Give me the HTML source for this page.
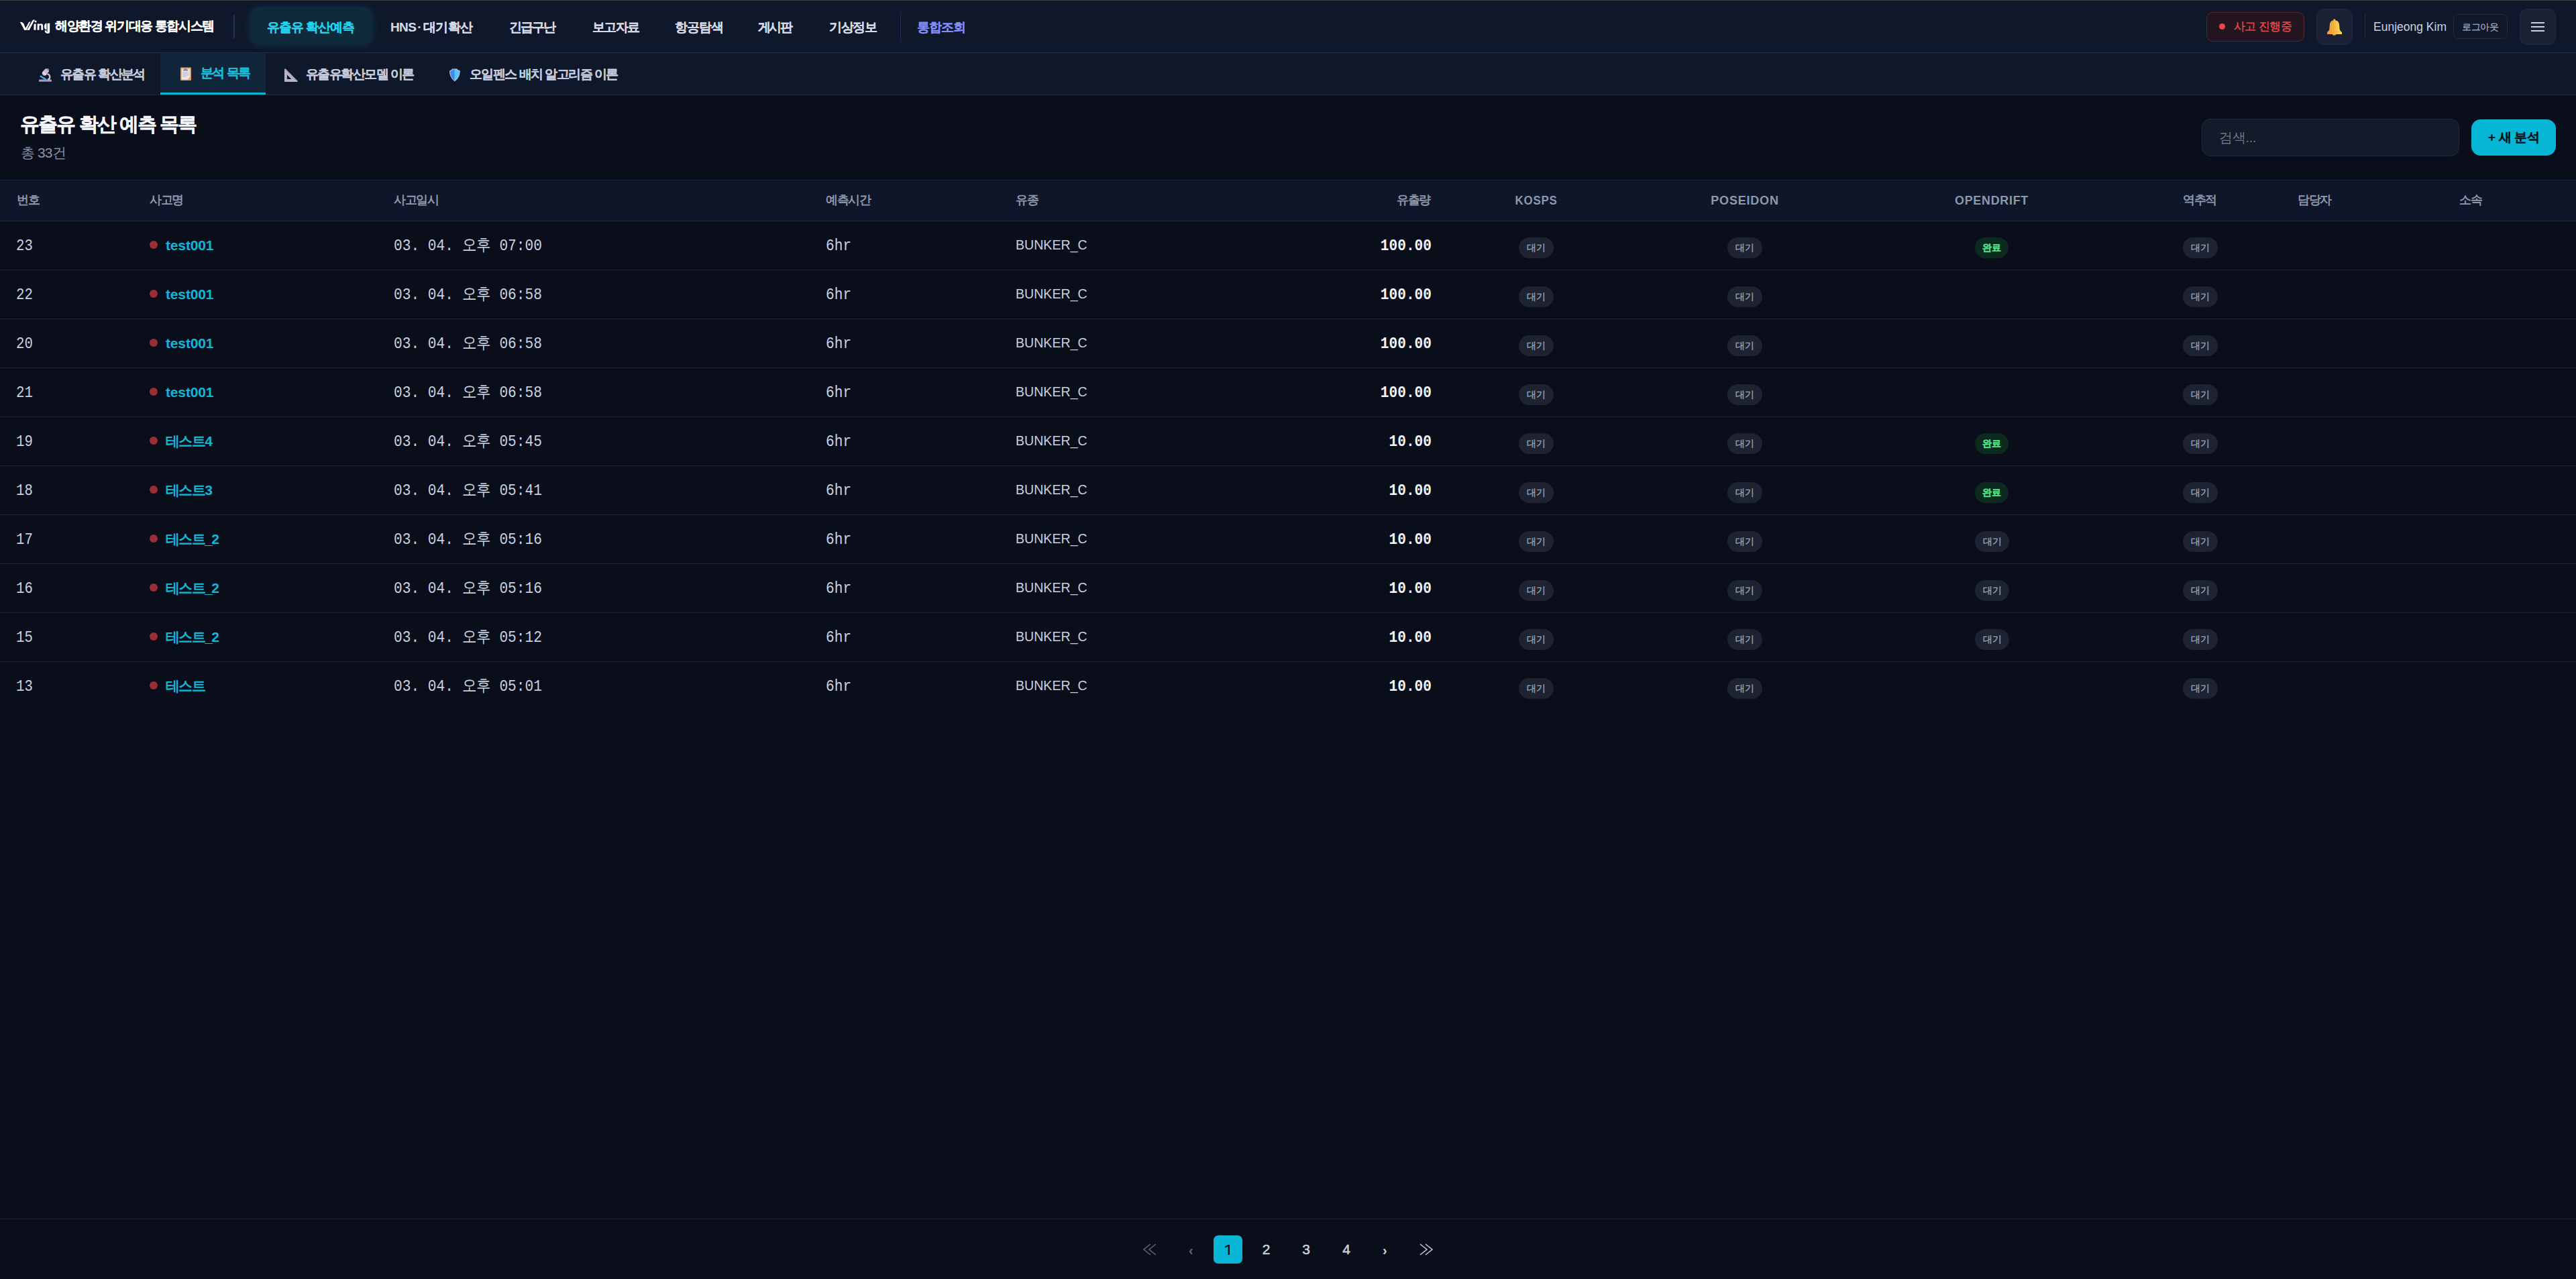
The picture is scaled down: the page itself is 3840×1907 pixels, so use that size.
<!DOCTYPE html><html lang="ko"><head><meta charset="utf-8"><title>유출유 확산 예측 목록</title><style>
*{box-sizing:border-box;margin:0;padding:0}
html,body{width:3840px;height:1907px;overflow:hidden}
body{position:relative;background:#0a0e1a;font-family:"Liberation Sans",sans-serif;color:#c9d1e0}
.a{position:absolute;white-space:nowrap}
.ko{-webkit-text-stroke:0.35px currentColor}
.ni{position:absolute;white-space:nowrap;top:25px;font-size:19px;letter-spacing:-1px;font-weight:700;line-height:32px;color:#d3dae6;-webkit-text-stroke:0.12px currentColor}
.tab{position:absolute;white-space:nowrap;top:95px;font-size:19px;letter-spacing:-1.55px;font-weight:700;line-height:32px;color:#c3cadb;-webkit-text-stroke:0.12px currentColor}
.th{position:absolute;white-space:nowrap;top:284px;font-size:17.5px;letter-spacing:-1.3px;font-weight:700;line-height:28px;color:#8e98ab;-webkit-text-stroke:0px currentColor}
.thl{position:absolute;white-space:nowrap;top:285px;font-size:19px;letter-spacing:0.8px;transform:scaleX(0.875);font-weight:700;line-height:28px;color:#8e98ab}
.rb{position:absolute;left:0;width:3840px;height:1px;background:#1a2338}
.num{position:absolute;white-space:nowrap;font-family:'Liberation Mono',monospace;font-size:23.5px;line-height:30px;color:#c9d1e0;transform:scaleX(0.88);transform-origin:0 0}
.name{position:absolute;white-space:nowrap;font-size:21px;font-weight:700;line-height:30px;color:#0eb8d6;letter-spacing:-0.15px}
.dot{position:absolute;width:12px;height:12px;border-radius:50%;background:#9a2d35}
.date{position:absolute;white-space:nowrap;font-family:'Liberation Mono',monospace;font-size:23.5px;line-height:30px;color:#c9d1e0;transform:scaleX(0.9);transform-origin:0 0}
.hr{position:absolute;white-space:nowrap;font-family:'Liberation Mono',monospace;font-size:23.5px;line-height:30px;color:#c9d1e0;transform:scaleX(0.9);transform-origin:0 0}
.oil{position:absolute;white-space:nowrap;font-size:19.6px;line-height:30px;color:#c9d1e0}
.amt{position:absolute;white-space:nowrap;font-family:'Liberation Mono',monospace;font-size:23.5px;font-weight:700;line-height:30px;color:#f1f5fa;text-align:right;transform:scaleX(0.9);transform-origin:100% 0}
.bdg{position:absolute;height:31px;width:52px;border-radius:16px;background:#1d2331;color:#9aa3b4;font-size:14px;line-height:31px;text-align:center;-webkit-text-stroke:0.35px currentColor}
.bdg.ok{background:#0d2a1f;color:#4ade80;width:50px;font-weight:700}
.pg{position:absolute;top:1841px;height:43px;width:43px;text-align:center;line-height:43px;font-size:21px;font-weight:700;color:#c8cfdd}
</style></head><body>
<div class="a" style="left:0;top:0;width:3840px;height:1px;background:#3a3b3e"></div>
<div class="a" style="left:0;top:1px;width:3840px;height:77px;background:#0f172a"></div>
<div class="a" style="left:0;top:78px;width:3840px;height:1px;background:#1e2a45"></div>
<svg class="a" style="left:26px;top:24px" width="54" height="30" viewBox="0 0 54 30"><g fill="#fff"><path d="M3.8 8.8 Q7.5 8.6 9.2 11 L13.4 20.9 L10.4 21 Z"/><path d="M10.4 21 L13.4 20.9 L19.6 8.2 Q18 8.3 16.8 9.4 Z"/><path d="M14 21.1 L17.6 21 L24.6 7.5 Q25.6 5.6 26.2 5.2 Q23.8 5.1 22.4 6.6 Z"/><circle cx="27" cy="8" r="1.6"/><path d="M24.6 12 L27.6 11.2 L27.4 20.8 L24.4 20.8 Z"/><path d="M29.6 20.8 L29.8 11.6 L32.4 11.2 L32.5 12.6 Q34 11.1 36.4 11.4 Q38.2 12 38.2 14.5 L38.2 20.8 L35.3 20.8 L35.3 14.8 Q35 13.2 33.8 13.4 Q32.6 13.8 32.5 15 L32.5 20.8 Z"/><path d="M44.6 10.9 L48.2 10.5 L48.2 24.2 Q48 26 45.2 26 Q41.6 26 40.4 21.4 L43.2 21.2 Q43.9 24.2 44.6 24.1 Z"/><path d="M43.5 10.6 Q40 10.9 40 15.6 Q40 20.3 43.5 20.6 Z"/></g></svg>
<div class="a ko" style="left:82px;top:23px;font-size:18.5px;letter-spacing:-1.35px;font-weight:700;line-height:32px;color:#fff;-webkit-text-stroke:0.15px #fff">해양환경 위기대응 통합시스템</div>
<div class="a" style="left:348px;top:22px;width:2px;height:35px;background:#27324d"></div>
<div class="a" style="left:373px;top:11px;width:182px;height:56px;border-radius:16px;background:#0e2a3b;box-shadow:0 0 10px 2px rgba(6,182,212,0.14)"></div>
<div class="ni" style="left:398px;letter-spacing:-1px;color:#22d3ee;">유출유 확산예측</div>
<div class="ni" style="left:582px;letter-spacing:-0.6px;">HNS<span style="margin:0 3px 0 2px">·</span>대기확산</div>
<div class="ni" style="left:759px;letter-spacing:-2.1px;">긴급구난</div>
<div class="ni" style="left:883px;letter-spacing:-1.6px;">보고자료</div>
<div class="ni" style="left:1006px;letter-spacing:-0.9px;">항공탐색</div>
<div class="ni" style="left:1130px;letter-spacing:-2.6px;">게시판</div>
<div class="ni" style="left:1236px;letter-spacing:-1.5px;">기상정보</div>
<div class="a" style="left:1342px;top:13px;width:110px;height:53px;border-left:1px solid #262c52;border-radius:7px 0 0 7px"></div>
<div class="ni" style="left:1367px;color:#818cf8">통합조회</div>
<div class="a" style="left:3289px;top:18px;width:146px;height:44px;border-radius:9px;background:#241621;border:1.5px solid #5c2229"></div>
<div class="a" style="left:3308px;top:35px;width:9px;height:9px;border-radius:50%;background:#ef4444"></div>
<div class="a" style="left:3330px;top:25px;font-size:17px;letter-spacing:-0.6px;line-height:30px;color:#ef4b4b;-webkit-text-stroke:0.3px #ef4b4b">사고 진행중</div>
<div class="a" style="left:3453px;top:13px;width:54px;height:54px;border-radius:11px;background:#1a2135;border:1px solid #1f2a45"></div>
<svg class="a" style="left:3466px;top:27px" width="28" height="28" viewBox="0 0 28 28"><defs><linearGradient id="bg1" x1="0" x2="1"><stop offset="0" stop-color="#ea9548"/><stop offset="0.45" stop-color="#f2b23e"/><stop offset="1" stop-color="#ffe75c"/></linearGradient></defs><ellipse cx="13.6" cy="24.3" rx="2.7" ry="1.5" fill="#ef9a5a"/><path d="M12 3.6 Q12.3 1.2 13.8 1.2 Q15.3 1.2 15.6 3.6 Q20 4 20.9 9 L21.7 17 Q22.5 19.3 25 21.2 L25 24 L3 24 L3 21.2 Q5.5 19.3 6.3 17 L7 9 Q7.8 4 12 3.6 Z" fill="url(#bg1)"/><path d="M4.8 19.6 L22.6 19.6 L24 20.8 L3.6 20.8 Z" fill="#f0a83c" opacity="0.6"/></svg>
<div class="a" style="left:3525px;top:21px;width:1px;height:36px;background:#243049"></div>
<div class="a" style="left:3538px;top:25px;font-size:17.5px;line-height:30px;color:#c9d3e4">Eunjeong Kim</div>
<div class="a" style="left:3657px;top:21px;width:81px;height:37px;border-radius:7px;border:1px solid #1f2a44"></div>
<div class="a" style="left:3670px;top:25px;font-size:14px;letter-spacing:-0.3px;line-height:30px;color:#a9b3c5;-webkit-text-stroke:0.2px #a9b3c5">로그아웃</div>
<div class="a" style="left:3756px;top:13px;width:54px;height:54px;border-radius:11px;background:#1a2135;border:1px solid #1f2a45"></div>
<div class="a" style="left:3773px;top:33px;width:20px;height:2px;background:#c9d1e0"></div>
<div class="a" style="left:3773px;top:39px;width:20px;height:2px;background:#c9d1e0"></div>
<div class="a" style="left:3773px;top:45px;width:20px;height:2px;background:#c9d1e0"></div>
<div class="a" style="left:0;top:79px;width:3840px;height:62px;background:#0f172a"></div>
<div class="a" style="left:0;top:141px;width:3840px;height:1px;background:#1e2a45"></div>
<div class="a" style="left:239px;top:79px;width:157px;height:62px;background:#10243a"></div>
<div class="a" style="left:239px;top:138px;width:157px;height:3px;background:#06b6d4"></div>
<svg class="a" style="left:57px;top:102px" width="21" height="21" viewBox="0 0 21 21"><rect x="1" y="16.6" width="19" height="3.4" rx="1" fill="#a999b8"/><rect x="1" y="19.1" width="19" height="0.9" fill="#8e62b4"/><path d="M13.4 8.3 A4.4 4.4 0 0 1 14.4 16.8" stroke="#cbc5d5" stroke-width="2.3" fill="none"/><g transform="rotate(40 10.8 5.6)"><rect x="7.3" y="-0.2" width="7" height="11.6" rx="3.5" fill="#c6c0cf"/><rect x="7.3" y="7.2" width="7" height="1.7" fill="#e9dbf7"/><rect x="9" y="-1" width="3.6" height="2.2" rx="1" fill="#8d8595"/></g><line x1="3.6" y1="11.8" x2="11.4" y2="16.4" stroke="#45abf3" stroke-width="2.3" stroke-linecap="round"/></svg>
<div class="tab" style="left:90px">유출유 확산분석</div>
<svg class="a" style="left:268px;top:99px" width="18" height="22" viewBox="0 0 18 22"><rect x="1" y="1.6" width="16" height="19.3" rx="1.2" fill="#e6a05a"/><path d="M2.8 3.4 L15 3.4 L15 16.4 L12 19.4 L2.8 19.4 Z" fill="#ece6f4"/><path d="M15 16.4 L12 19.4 L12 16.4 Z" fill="#d8d2e4"/><path d="M5 6.8 Q5.2 3.8 7.6 3.6 L8.6 1.2 L9.6 3.6 Q12 3.8 12.2 6.8 Z" fill="#948b9c"/><g fill="#c4bfcd"><rect x="3.9" y="8.6" width="9.6" height="1.2"/><rect x="3.9" y="10.6" width="9.6" height="1.2"/><rect x="3.9" y="12.6" width="9.6" height="1.2"/><rect x="3.9" y="14.6" width="5.6" height="1.2"/></g></svg>
<div class="tab" style="left:299px;top:93px;color:#16bedc">분석 목록</div>
<svg class="a" style="left:423px;top:101px" width="22" height="22" viewBox="0 0 22 22"><path d="M1 2.6 Q1 0.9 2.6 1.6 L21 20 Q21 21 20 21 L1.8 21 Q1 21 1 20 Z" fill="#b9b6c2"/><path d="M4.9 10.6 L11.4 17 L4.9 17 Z" fill="#0f1526"/><g fill="#a579f0"><circle cx="2.8" cy="3.6" r="0.7"/><circle cx="4.8" cy="5.5" r="0.7"/><circle cx="6.7" cy="7.4" r="0.7"/><circle cx="8.6" cy="9.2" r="0.7"/><circle cx="10.5" cy="11.1" r="0.7"/><circle cx="12.4" cy="13" r="0.7"/><circle cx="14.3" cy="14.8" r="0.7"/><circle cx="16.2" cy="16.6" r="0.7"/><circle cx="18.2" cy="18.5" r="0.7"/></g></svg>
<div class="tab" style="left:456px">유출유확산모델 이론</div>
<svg class="a" style="left:669px;top:101px" width="18" height="22" viewBox="0 0 18 22"><path d="M5 1.4 L12.3 1.4 L13.2 3 L16.8 4.5 Q17.2 14 8.8 20.6 Q0.6 14 1.1 4.5 L4.3 3 Z" fill="#c3c6d6"/><path d="M5.6 2.5 L8.8 2.5 L8.8 19.4 Q1.8 13.5 2.2 5.3 L5 4 Z" fill="#3d88ec"/><path d="M8.8 2.5 L11.8 2.5 L12.6 4 L15.7 5.3 Q16 13.5 8.8 19.4 Z" fill="#55c7fc"/></svg>
<div class="tab" style="left:700px">오일펜스 배치 알고리즘 이론</div>
<div class="a" style="left:30px;top:165px;font-size:28.5px;letter-spacing:-1.85px;font-weight:700;line-height:40px;color:#f4f6fb;-webkit-text-stroke:0.35px #f4f6fb">유출유 확산 예측 목록</div>
<div class="a" style="left:31px;top:213px;font-size:21px;letter-spacing:-0.9px;line-height:30px;color:#8a94a7">총 33건</div>
<div class="a" style="left:3282px;top:177px;width:384px;height:56px;border-radius:13px;background:#131a2a;border:1px solid #1e2840"></div>
<div class="a" style="left:3308px;top:190px;font-size:20px;letter-spacing:-0.3px;line-height:30px;color:#6d7689">검색...</div>
<div class="a" style="left:3684px;top:178px;width:126px;height:54px;border-radius:14px;background:#06b6d4"></div>
<div class="a" style="left:3709px;top:190px;font-size:19px;letter-spacing:-0.4px;font-weight:700;line-height:30px;color:#07111c;-webkit-text-stroke:0.15px #07111c">+ 새 분석</div>
<div class="a" style="left:0;top:268px;width:3840px;height:1px;background:#1c2640"></div>
<div class="a" style="left:0;top:269px;width:3840px;height:60px;background:#0f1629"></div>
<div class="a" style="left:0;top:329px;width:3840px;height:1px;background:#1e2a45"></div>
<div class="th" style="left:25px">번호</div>
<div class="th" style="left:223px">사고명</div>
<div class="th" style="left:587px">사고일시</div>
<div class="th" style="left:1231px">예측시간</div>
<div class="th" style="left:1514px">유종</div>
<div class="th" style="left:1980px;width:152px;text-align:right">유출량</div>
<div class="thl" style="left:2139.5px;width:300px;text-align:center;transform:scaleX(0.89)">KOSPS</div>
<div class="thl" style="left:2451px;width:300px;text-align:center;transform:scaleX(0.95)">POSEIDON</div>
<div class="thl" style="left:2819px;width:300px;text-align:center;transform:scaleX(0.94)">OPENDRIFT</div>
<div class="th" style="left:3129px;width:300px;text-align:center">역추적</div>
<div class="th" style="left:3425px">담당자</div>
<div class="th" style="left:3666px">소속</div>
<div class="num" style="left:24px;top:352px">23</div>
<div class="dot" style="left:223px;top:359px"></div>
<div class="name" style="left:247px;top:351px;">test001</div>
<div class="date" style="left:587px;top:352px">03. 04. 오후 07:00</div>
<div class="hr" style="left:1231px;top:352px">6hr</div>
<div class="oil" style="left:1514px;top:350px">BUNKER_C</div>
<div class="amt" style="left:1934px;width:200px;top:352px">100.00</div>
<div class="bdg" style="left:2264px;top:354px">대기</div>
<div class="bdg" style="left:2575px;top:354px">대기</div>
<div class="bdg ok" style="left:2944px;top:354px">완료</div>
<div class="bdg" style="left:3254px;top:354px">대기</div>
<div class="rb" style="top:402px"></div>
<div class="num" style="left:24px;top:425px">22</div>
<div class="dot" style="left:223px;top:432px"></div>
<div class="name" style="left:247px;top:424px;">test001</div>
<div class="date" style="left:587px;top:425px">03. 04. 오후 06:58</div>
<div class="hr" style="left:1231px;top:425px">6hr</div>
<div class="oil" style="left:1514px;top:423px">BUNKER_C</div>
<div class="amt" style="left:1934px;width:200px;top:425px">100.00</div>
<div class="bdg" style="left:2264px;top:427px">대기</div>
<div class="bdg" style="left:2575px;top:427px">대기</div>
<div class="bdg" style="left:3254px;top:427px">대기</div>
<div class="rb" style="top:475px"></div>
<div class="num" style="left:24px;top:498px">20</div>
<div class="dot" style="left:223px;top:505px"></div>
<div class="name" style="left:247px;top:497px;">test001</div>
<div class="date" style="left:587px;top:498px">03. 04. 오후 06:58</div>
<div class="hr" style="left:1231px;top:498px">6hr</div>
<div class="oil" style="left:1514px;top:496px">BUNKER_C</div>
<div class="amt" style="left:1934px;width:200px;top:498px">100.00</div>
<div class="bdg" style="left:2264px;top:500px">대기</div>
<div class="bdg" style="left:2575px;top:500px">대기</div>
<div class="bdg" style="left:3254px;top:500px">대기</div>
<div class="rb" style="top:548px"></div>
<div class="num" style="left:24px;top:571px">21</div>
<div class="dot" style="left:223px;top:578px"></div>
<div class="name" style="left:247px;top:570px;">test001</div>
<div class="date" style="left:587px;top:571px">03. 04. 오후 06:58</div>
<div class="hr" style="left:1231px;top:571px">6hr</div>
<div class="oil" style="left:1514px;top:569px">BUNKER_C</div>
<div class="amt" style="left:1934px;width:200px;top:571px">100.00</div>
<div class="bdg" style="left:2264px;top:573px">대기</div>
<div class="bdg" style="left:2575px;top:573px">대기</div>
<div class="bdg" style="left:3254px;top:573px">대기</div>
<div class="rb" style="top:621px"></div>
<div class="num" style="left:24px;top:644px">19</div>
<div class="dot" style="left:223px;top:651px"></div>
<div class="name" style="left:247px;top:643px;letter-spacing:-1.6px;">테스트4</div>
<div class="date" style="left:587px;top:644px">03. 04. 오후 05:45</div>
<div class="hr" style="left:1231px;top:644px">6hr</div>
<div class="oil" style="left:1514px;top:642px">BUNKER_C</div>
<div class="amt" style="left:1934px;width:200px;top:644px">10.00</div>
<div class="bdg" style="left:2264px;top:646px">대기</div>
<div class="bdg" style="left:2575px;top:646px">대기</div>
<div class="bdg ok" style="left:2944px;top:646px">완료</div>
<div class="bdg" style="left:3254px;top:646px">대기</div>
<div class="rb" style="top:694px"></div>
<div class="num" style="left:24px;top:717px">18</div>
<div class="dot" style="left:223px;top:724px"></div>
<div class="name" style="left:247px;top:716px;letter-spacing:-1.6px;">테스트3</div>
<div class="date" style="left:587px;top:717px">03. 04. 오후 05:41</div>
<div class="hr" style="left:1231px;top:717px">6hr</div>
<div class="oil" style="left:1514px;top:715px">BUNKER_C</div>
<div class="amt" style="left:1934px;width:200px;top:717px">10.00</div>
<div class="bdg" style="left:2264px;top:719px">대기</div>
<div class="bdg" style="left:2575px;top:719px">대기</div>
<div class="bdg ok" style="left:2944px;top:719px">완료</div>
<div class="bdg" style="left:3254px;top:719px">대기</div>
<div class="rb" style="top:767px"></div>
<div class="num" style="left:24px;top:790px">17</div>
<div class="dot" style="left:223px;top:797px"></div>
<div class="name" style="left:247px;top:789px;letter-spacing:-1.6px;">테스트_2</div>
<div class="date" style="left:587px;top:790px">03. 04. 오후 05:16</div>
<div class="hr" style="left:1231px;top:790px">6hr</div>
<div class="oil" style="left:1514px;top:788px">BUNKER_C</div>
<div class="amt" style="left:1934px;width:200px;top:790px">10.00</div>
<div class="bdg" style="left:2264px;top:792px">대기</div>
<div class="bdg" style="left:2575px;top:792px">대기</div>
<div class="bdg" style="left:2944px;width:51px;top:792px">대기</div>
<div class="bdg" style="left:3254px;top:792px">대기</div>
<div class="rb" style="top:840px"></div>
<div class="num" style="left:24px;top:863px">16</div>
<div class="dot" style="left:223px;top:870px"></div>
<div class="name" style="left:247px;top:862px;letter-spacing:-1.6px;">테스트_2</div>
<div class="date" style="left:587px;top:863px">03. 04. 오후 05:16</div>
<div class="hr" style="left:1231px;top:863px">6hr</div>
<div class="oil" style="left:1514px;top:861px">BUNKER_C</div>
<div class="amt" style="left:1934px;width:200px;top:863px">10.00</div>
<div class="bdg" style="left:2264px;top:865px">대기</div>
<div class="bdg" style="left:2575px;top:865px">대기</div>
<div class="bdg" style="left:2944px;width:51px;top:865px">대기</div>
<div class="bdg" style="left:3254px;top:865px">대기</div>
<div class="rb" style="top:913px"></div>
<div class="num" style="left:24px;top:936px">15</div>
<div class="dot" style="left:223px;top:943px"></div>
<div class="name" style="left:247px;top:935px;letter-spacing:-1.6px;">테스트_2</div>
<div class="date" style="left:587px;top:936px">03. 04. 오후 05:12</div>
<div class="hr" style="left:1231px;top:936px">6hr</div>
<div class="oil" style="left:1514px;top:934px">BUNKER_C</div>
<div class="amt" style="left:1934px;width:200px;top:936px">10.00</div>
<div class="bdg" style="left:2264px;top:938px">대기</div>
<div class="bdg" style="left:2575px;top:938px">대기</div>
<div class="bdg" style="left:2944px;width:51px;top:938px">대기</div>
<div class="bdg" style="left:3254px;top:938px">대기</div>
<div class="rb" style="top:986px"></div>
<div class="num" style="left:24px;top:1009px">13</div>
<div class="dot" style="left:223px;top:1016px"></div>
<div class="name" style="left:247px;top:1008px;letter-spacing:-1.6px;">테스트</div>
<div class="date" style="left:587px;top:1009px">03. 04. 오후 05:01</div>
<div class="hr" style="left:1231px;top:1009px">6hr</div>
<div class="oil" style="left:1514px;top:1007px">BUNKER_C</div>
<div class="amt" style="left:1934px;width:200px;top:1009px">10.00</div>
<div class="bdg" style="left:2264px;top:1011px">대기</div>
<div class="bdg" style="left:2575px;top:1011px">대기</div>
<div class="bdg" style="left:3254px;top:1011px">대기</div>
<div class="a" style="left:0;top:1817px;width:3840px;height:1px;background:#1c2640"></div>
<svg class="a" style="left:1703px;top:1854px" width="22" height="18" viewBox="0 0 22 18"><path d="M12 1 L2 9 L12 17 M20 1 L10 9 L20 17" stroke="#5f6577" stroke-width="1.6" fill="none"/></svg>
<div class="a" style="left:1772px;top:1852px;font-size:20px;line-height:24px;color:#5f6577;font-weight:700">&lsaquo;</div>
<div class="a" style="left:1809px;top:1842px;width:43px;height:42px;border-radius:7px;background:#06b6d4"></div>
<svg class="a" style="left:1822px;top:1852px" width="16" height="24" viewBox="0 0 16 24"><path d="M8.6 4 L11 4 L11 19 L8.6 19 L8.6 6.6 L4.4 8.4 L4 6.4 Z" fill="#07131c"/></svg>
<div class="a" style="left:1857.5px;top:1848px;width:60px;text-align:center;font-size:21px;line-height:30px;font-weight:400;color:#c8cfdd;-webkit-text-stroke:0.55px #c8cfdd">2</div>
<div class="a" style="left:1917px;top:1848px;width:60px;text-align:center;font-size:21px;line-height:30px;font-weight:400;color:#c8cfdd;-webkit-text-stroke:0.55px #c8cfdd">3</div>
<div class="a" style="left:1977px;top:1848px;width:60px;text-align:center;font-size:21px;line-height:30px;font-weight:400;color:#c8cfdd;-webkit-text-stroke:0.55px #c8cfdd">4</div>
<div class="a" style="left:2061px;top:1852px;font-size:20px;line-height:24px;color:#c8cfdd;font-weight:700">&rsaquo;</div>
<svg class="a" style="left:2115px;top:1854px" width="22" height="18" viewBox="0 0 22 18"><path d="M2 1 L12 9 L2 17 M10 1 L20 9 L10 17" stroke="#c0c7d6" stroke-width="1.6" fill="none"/></svg>
</body></html>
